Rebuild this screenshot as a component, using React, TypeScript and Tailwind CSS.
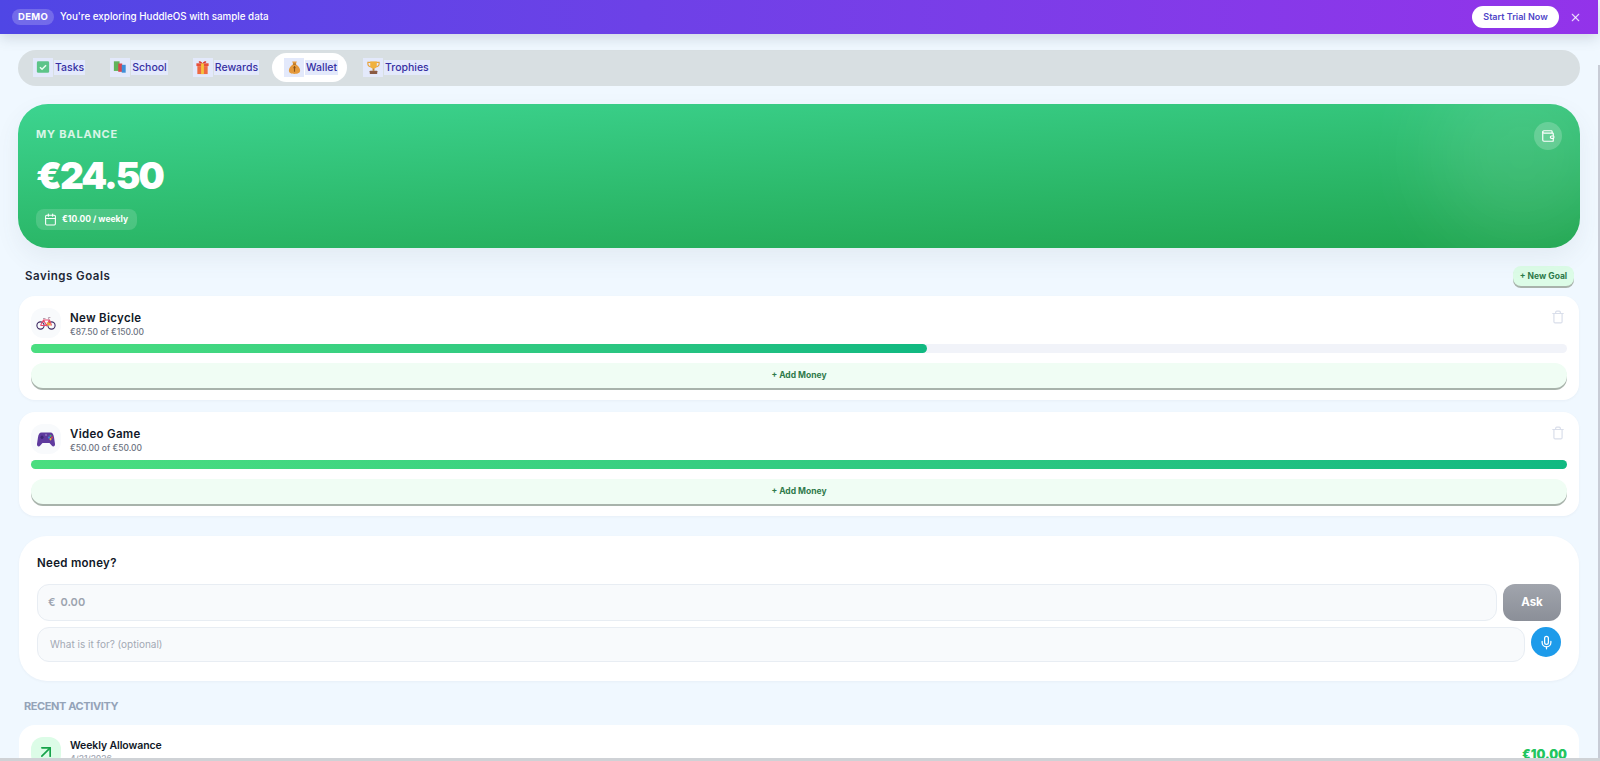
import type { ReactNode } from "react";
import { ArrowUpRight, Calendar, Mic, Trash, Wallet, X } from "lucide-react";

const CheckIcon = () => (
  <svg viewBox="0 0 16 16" className="h-[14px] w-[14px]">
    <rect x="1" y="1.5" width="14" height="13" rx="1.5" fill="#5cc488" />
    <path d="M4.5 8.2l2.4 2.3 4.6-4.6" fill="none" stroke="#eafff2" strokeWidth="1.7" />
  </svg>
);

const BooksIcon = () => (
  <svg viewBox="0 0 16 16" className="h-[14px] w-[14px]">
    <rect x="1" y="1.5" width="6.5" height="11" fill="#62b45c" />
    <rect x="6" y="4" width="4.5" height="9.5" fill="#d8474f" />
    <rect x="10" y="5.5" width="4.5" height="9" fill="#3f8fd8" />
  </svg>
);

const GiftIcon = () => (
  <svg viewBox="0 0 16 16" className="h-[15px] w-[15px]">
    <rect x="1.5" y="3.5" width="13" height="3" fill="#e8503a" />
    <rect x="2.5" y="6.5" width="11" height="8.5" fill="#ee6a42" />
    <rect x="6.5" y="3.5" width="3" height="11.5" fill="#f5c23e" />
    <path d="M8 3.5C6 .5 3.5 1 4 2.5c.3 1 2 1 4 1zm0 0c2-3 4.500-2.500 4-1-.3 1-2 1-4 1z" fill="#d83a30" />
  </svg>
);

const BagIcon = () => (
  <svg viewBox="0 0 16 16" className="h-[15px] w-[15px]">
    <path d="M5.500 1.500h5L9.300 4.500c2.700 1.500 4.700 4.300 4.700 6.700 0 2.600-2.500 3.600-6 3.600s-6-1-6-3.600c0-2.400 2-5.200 4.700-6.700z" fill="#e59a3c" />
    <rect x="6.300" y="3.800" width="3.400" height="1.200" fill="#a86a22" />
    <path d="M8 6.500v6M6.700 8.300h2.600" stroke="#8a5418" strokeWidth="1.200" />
  </svg>
);

const TrophyIcon = () => (
  <svg viewBox="0 0 16 16" className="h-[15px] w-[15px]">
    <path d="M2 2.500h12v1.500c0 2-1.500 3.200-3.500 3.400H5.500C3.500 7.200 2 6 2 4z" fill="none" stroke="#e8a33a" strokeWidth="1.200" />
    <path d="M4.500 1.500h7v4c0 2.200-1.500 3.700-3.500 3.700S4.500 7.700 4.500 5.500z" fill="#f0b23e" />
    <rect x="7" y="9" width="2" height="2.500" fill="#c98a2c" />
    <rect x="4" y="11.500" width="8" height="3.500" rx=".5" fill="#8a5a44" />
  </svg>
);

const BikeIcon = () => (
  <svg viewBox="0 0 20 20" className="h-[20px] w-[20px]">
    <circle cx="4.500" cy="12.500" r="3.600" fill="none" stroke="#3f2b63" strokeWidth="1.100" />
    <circle cx="15.500" cy="12.500" r="3.600" fill="none" stroke="#3f2b63" strokeWidth="1.100" />
    <path d="M4.500 12.500L7.500 7h6l2 5.500M7.500 7l3 5.500 3-5.500M4.500 12.500h6" fill="none" stroke="#e8476a" strokeWidth="1.100" />
    <path d="M7 5.500h2.500M13 7l-.6-2.500h2" fill="none" stroke="#b8a0b0" strokeWidth="1" />
    <path d="M10.500 9.500h3.500l1 3h-3.500z" fill="#f5a63e" />
  </svg>
);

const GamepadIcon = () => (
  <svg viewBox="0 0 20 20" preserveAspectRatio="none" className="h-[23px] w-[20px]">
    <path d="M5.500 4h9c2 0 3 1.500 3.500 4l1 6c.3 2-2 2.800-3.300 1.300L13.500 13h-7l-2.200 2.300C3 16.800.7 16 1 14l1-6c.5-2.500 1.500-4 3.500-4z" fill="#5f3a9e" />
    <circle cx="6" cy="8" r="1.500" fill="#3f2678" />
    <circle cx="14.500" cy="6.800" r="1" fill="#4caf6a" />
    <circle cx="13" cy="8.300" r="1" fill="#3f8fd8" />
    <circle cx="16" cy="8.300" r="1" fill="#d8474f" />
    <circle cx="14.500" cy="9.800" r="1" fill="#f0b23e" />
    <circle cx="10" cy="6" r=".9" fill="#8f78c0" />
  </svg>
);

const tabs: { label: string; icon: ReactNode; active?: boolean }[] = [
  { label: "Tasks", icon: <CheckIcon /> },
  { label: "School", icon: <BooksIcon /> },
  { label: "Rewards", icon: <GiftIcon /> },
  { label: "Wallet", icon: <BagIcon />, active: true },
  { label: "Trophies", icon: <TrophyIcon /> },
];

const goals = [
  { name: "New Bicycle", icon: <BikeIcon />, amount: "€87.50 of €150.00", saved: 87.5, target: 150 },
  { name: "Video Game", icon: <GamepadIcon />, amount: "€50.00 of €50.00", saved: 50, target: 50 },
];

const GoalCard = ({ name, icon, amount, saved, target }: (typeof goals)[number]) => (
  <div className="mx-px h-[104px] rounded-2xl bg-white px-3 pt-3 shadow-[0_1px_3px_rgba(15,23,42,0.04)]">
    <div className="flex h-[30px] items-center gap-[9px]">
      <div className="flex h-[30px] w-[30px] items-center justify-center rounded-xl bg-[#f8fafc]">{icon}</div>
      <div className="mt-[3px] flex-1">
        <div className="text-[11.5px] leading-[15px] font-semibold tracking-[0.3px] text-[#111827]">{name}</div>
        <div className="text-[8.5px] leading-[13px] font-medium text-[#6b7280]">{amount}</div>
      </div>
      <Trash className="mr-[2px] mb-3 h-[14px] w-[14px] text-[#d9deea]" />
    </div>
    <div className="mt-1.5 h-[9px] rounded-full bg-[#f1f3f9]">
      <div
        className="h-full rounded-full bg-gradient-to-r from-[#4ade80] to-[#10b981]"
        style={{ width: `${(saved / target) * 100}%` }}
      />
    </div>
    <button className="mt-[10px] flex h-[25px] w-full items-center justify-center rounded-xl bg-[#f0fdf4] text-[8.5px] font-bold text-[#2f7a4b] shadow-[0_2px_0_#a8b3ab]">
      + Add Money
    </button>
  </div>
);

export default function App() {
  return (
    <div className="relative h-[761px] w-[1600px] overflow-hidden bg-[#f0f8ff] font-['Inter',sans-serif]">
      {/* Demo banner */}
      <div className="relative z-10 flex h-[34px] w-[1598px] items-center bg-gradient-to-r from-[#4f46e5] to-[#9333ea] pr-[16px] pl-3 shadow-[0_4px_14px_rgba(71,85,105,0.2)]">
        <span className="rounded-full bg-white/20 px-1.5 py-px text-[9.5px] font-bold tracking-[0.3px] text-white">DEMO</span>
        <span className="ml-1.5 flex-1 text-[9.8px] font-medium text-white">You're exploring HuddleOS with sample data</span>
        <button className="h-[22px] w-[87px] rounded-full bg-white text-[9px] font-semibold text-[#4f46c8]">Start Trial Now</button>
        <X className="ml-[10px] h-[13px] w-[13px] text-white/80" />
      </div>

      <div className="w-[1598px] px-[18px]">
        {/* Tabs */}
        <div className="mt-4 flex h-[36px] items-center gap-[4px] rounded-full bg-[#d8dfe2] pb-[2px] pl-[3px]">
          {tabs.map((t) => (
            <div
              key={t.label}
              className={`flex h-[29px] items-center gap-px rounded-full pr-[9px] pl-3 ${t.active ? "bg-white" : ""}`}
            >
              <span className="flex h-[19px] w-5 items-center justify-center bg-[#e3e9fb]">{t.icon}</span>
              <span className="bg-[#e3e9fb] px-px text-[10.5px] leading-[15px] font-medium text-[#3730a3]">{t.label}</span>
            </div>
          ))}
        </div>

        {/* Balance */}
        <div className="relative mt-[18px] h-[144px] overflow-hidden rounded-[30px] bg-[linear-gradient(177deg,#3dd490,#20a650)] px-[18px] pt-[22px] text-white shadow-[0_10px_24px_rgba(71,85,105,0.08)]">
          <div className="absolute -top-10 -right-8 h-[180px] w-[180px] rounded-full bg-white/10 blur-2xl" />
          <div className="text-[11px] leading-4 font-bold tracking-[0.8px] text-white/80">MY BALANCE</div>
          <div className="mt-[12px] text-[37px] leading-[44px] font-black tracking-[-2px]">€24.50</div>
          <div className="mt-[11px] flex h-[21px] w-[101px] items-center gap-[5px] rounded-lg bg-white/15 pl-2 text-[8.5px] font-bold">
            <Calendar className="h-[13px] w-[13px]" />
            €10.00 / weekly
          </div>
          <div className="absolute top-[18px] right-[18px] flex h-7 w-7 items-center justify-center rounded-full bg-white/20">
            <Wallet className="h-[14px] w-[14px]" />
          </div>
        </div>

        {/* Savings goals */}
        <div className="mt-[18px] flex h-[20px] items-center justify-between pr-1.5 pl-[7px]">
          <span className="pt-[2px] text-[11.5px] font-semibold tracking-[0.5px] text-[#1f2937]">Savings Goals</span>
          <button className="h-[20px] w-[61px] rounded-lg bg-[#dcfce7] text-[8.5px] font-bold text-[#2f7a4b] shadow-[0_2px_0_#a8b3ab]">+ New Goal</button>
        </div>
        <div className="mt-[10px] flex flex-col gap-3">
          {goals.map((g) => (
            <GoalCard key={g.name} {...g} />
          ))}
        </div>

        {/* Need money */}
        <div className="mx-px mt-5 h-[145px] rounded-[28px] bg-white px-[18px] pt-5 shadow-[0_1px_3px_rgba(15,23,42,0.04)]">
          <div className="text-[11.5px] leading-[15px] font-semibold tracking-[0.3px] text-[#111827]">Need money?</div>
          <div className="mt-[13px] flex h-[37px] gap-1.5">
            <div className="flex flex-1 items-center gap-[5px] rounded-xl border border-[#e8edf3] bg-[#f8fafc] pl-2.5 text-[11px] font-semibold text-[#9ca3af]">
              <span>€</span>
              <span>0.00</span>
            </div>
            <button className="w-[58px] rounded-xl bg-gradient-to-b from-[#a1a5ad] to-[#8b8f98] text-[11.5px] font-bold text-white">Ask</button>
          </div>
          <div className="mt-1.5 flex gap-1.5">
            <div className="flex h-[35px] flex-1 items-center rounded-xl border border-[#e8edf3] bg-[#f8fafc] pl-3 text-[10px] text-[#a3a9b4]">
              What is it for? (optional)
            </div>
            <div className="flex h-[30px] w-[30px] items-center justify-center rounded-full bg-[#1d9bea] text-white">
              <Mic className="h-[15px] w-[15px]" />
            </div>
          </div>
        </div>

        {/* Recent activity */}
        <div className="mt-[17px] pl-1.5 text-[11px] leading-4 font-bold tracking-[-0.4px] text-[#94a3b8]">RECENT ACTIVITY</div>
        <div className="mx-px mt-[11px] flex h-[60px] gap-[9px] rounded-2xl bg-white px-3 pt-3">
          <div className="flex h-[30px] w-[30px] items-center justify-center rounded-xl bg-[#dcfce7]">
            <ArrowUpRight className="h-5 w-5 text-[#16a34a]" />
          </div>
          <div className="flex-1">
            <div className="mt-px text-[10.5px] leading-[15px] font-semibold tracking-[-0.1px] text-[#111827]">Weekly Allowance</div>
            <div className="text-[8.5px] leading-[12px] font-medium text-[#9ca3af]">4/21/2026</div>
          </div>
          <div className="mt-[9px] text-[12.5px] font-black text-[#22c55e]">€10.00</div>
        </div>
      </div>

      {/* browser scrollbars */}
      <div className="absolute top-[65px] right-0 h-[696px] w-0.5 bg-[#c8ccd6]" />
      <div className="absolute right-0 bottom-0 left-0 h-[3px] bg-[#cfd2d6]" />
    </div>
  );
}
